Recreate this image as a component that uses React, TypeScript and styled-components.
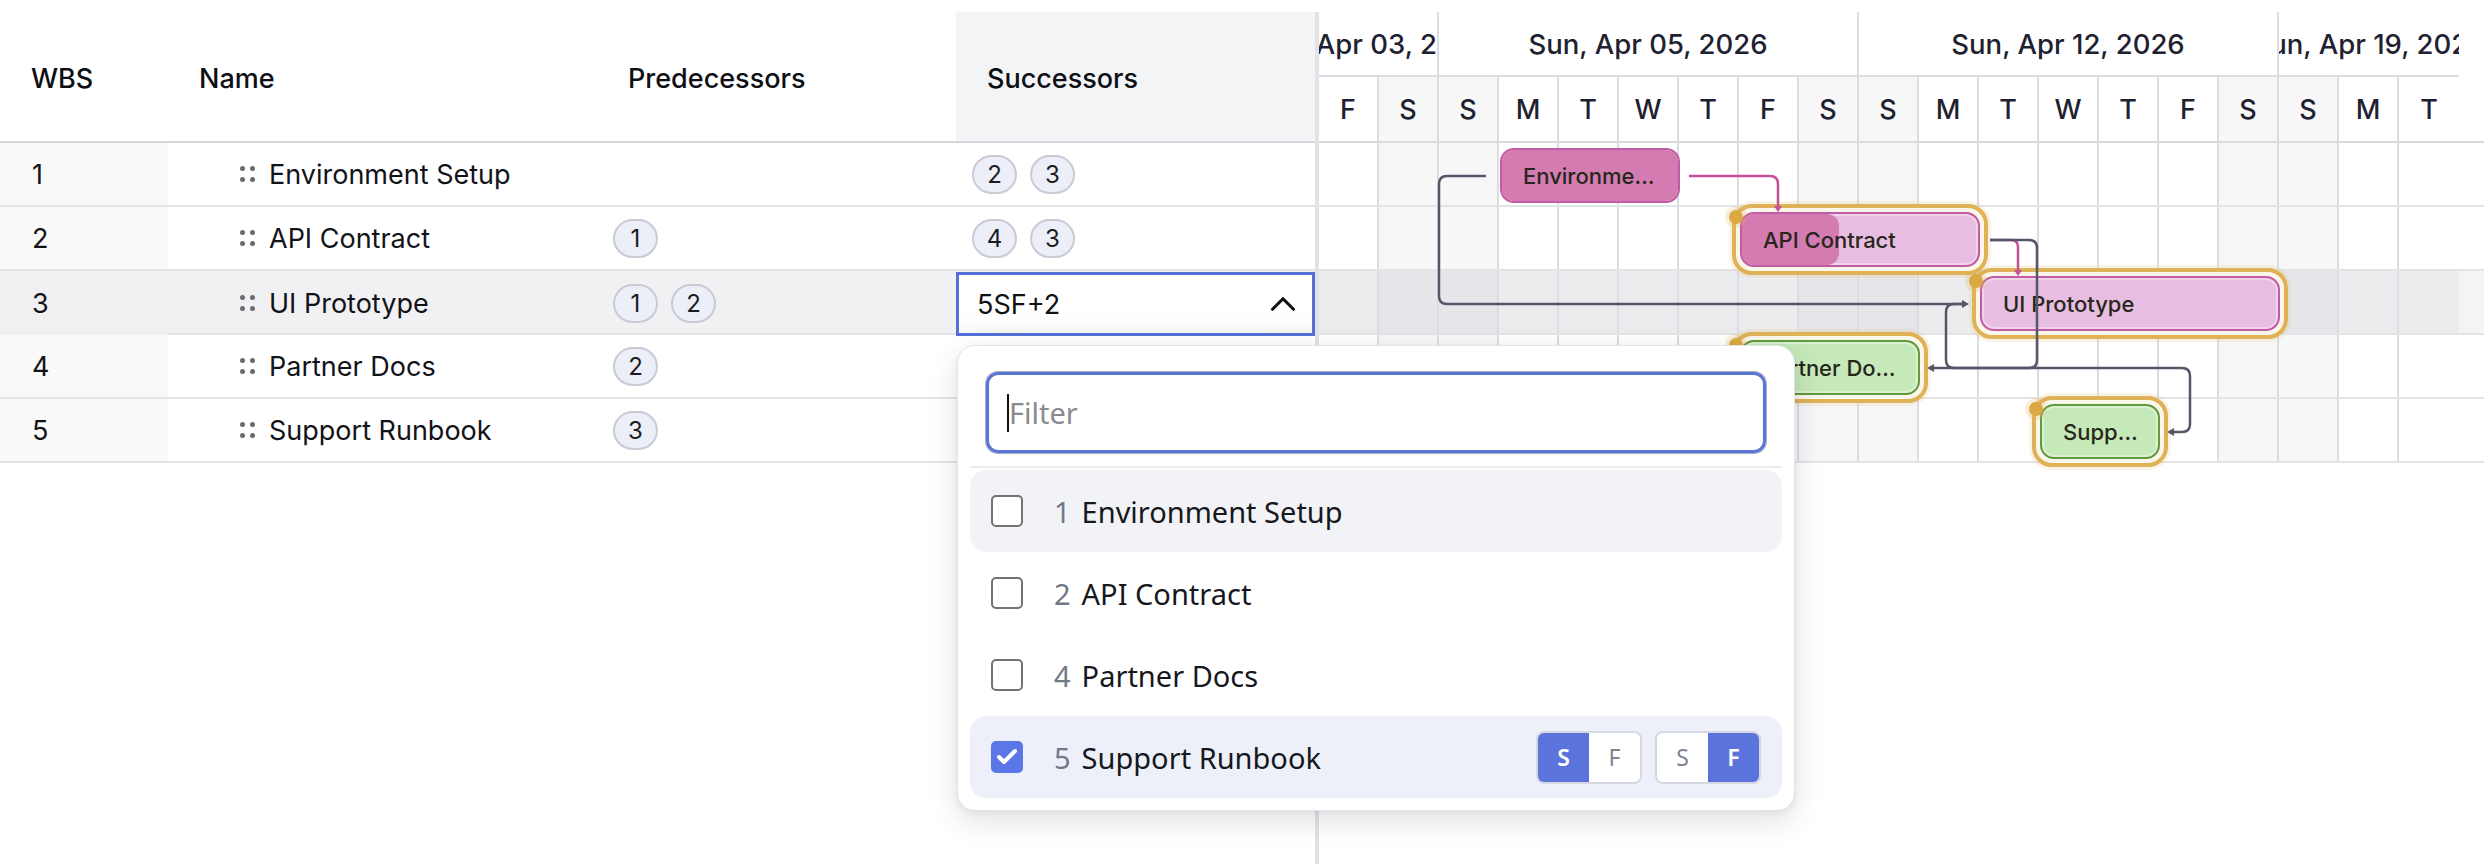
import React from 'react';
import styled, { createGlobalStyle } from 'styled-components';
import { Check, ChevronUp } from 'lucide-react';

const DAY = 60;
const ROW = 64;

const GlobalStyle = createGlobalStyle`
  html, body {
    margin: 0;
    padding: 0;
    background: #fff;
  }
  body {
    font-family: Inter, 'Liberation Sans', sans-serif;
    color: #111318;
  }
`;

type Task = {
  wbs: string;
  name: string;
  preds: string[];
  succs: string[];
  editing?: string;
};

const tasks: Task[] = [
  { wbs: '1', name: 'Environment Setup', preds: [], succs: ['2', '3'] },
  { wbs: '2', name: 'API Contract', preds: ['1'], succs: ['4', '3'] },
  { wbs: '3', name: 'UI Prototype', preds: ['1', '2'], succs: [], editing: '5SF+2' },
  { wbs: '4', name: 'Partner Docs', preds: ['2'], succs: [] },
  { wbs: '5', name: 'Support Runbook', preds: ['3'], succs: [] },
];

const SELECTED_ROW = 2;

const dayLetters = ['F', 'S', 'S', 'M', 'T', 'W', 'T', 'F', 'S', 'S', 'M', 'T', 'W', 'T', 'F', 'S', 'S', 'M', 'T'];
const isWeekend = (i: number) => dayLetters[i] === 'S';

const weeks = [
  { label: 'Fri, Apr 03, 2026', days: 2 },
  { label: 'Sun, Apr 05, 2026', days: 7 },
  { label: 'Sun, Apr 12, 2026', days: 7 },
  { label: 'Sun, Apr 19, 2026', days: 3 },
];

type Bar = {
  name: string;
  row: number;
  start: number;
  days: number;
  tone: 'pink' | 'green';
  progress: number;
  ringed: boolean;
};

const bars: Bar[] = [
  { name: 'Environment Setup', row: 0, start: 3, days: 3, tone: 'pink', progress: 100, ringed: false },
  { name: 'API Contract', row: 1, start: 7, days: 4, tone: 'pink', progress: 41, ringed: true },
  { name: 'UI Prototype', row: 2, start: 11, days: 5, tone: 'pink', progress: 0, ringed: true },
  { name: 'Partner Docs', row: 3, start: 7, days: 3, tone: 'green', progress: 0, ringed: true },
  { name: 'Support Runbook', row: 4, start: 12, days: 2, tone: 'green', progress: 0, ringed: true },
];

const options = [
  { wbs: '1', name: 'Environment Setup', checked: false, hover: true },
  { wbs: '2', name: 'API Contract', checked: false, hover: false },
  { wbs: '4', name: 'Partner Docs', checked: false, hover: false },
  { wbs: '5', name: 'Support Runbook', checked: true, hover: false },
];

const Page = styled.div`
  position: relative;
  width: 2484px;
  height: 864px;
  padding-top: 12px;
  box-sizing: border-box;
  overflow: hidden;
`;

const Board = styled.div`
  display: flex;
  height: 100%;
`;

const TablePane = styled.div`
  width: 1315px;
  flex: none;
`;

const TableRow = styled.div<{ $selected?: boolean }>`
  display: grid;
  grid-template-columns: 168px 429px 359px 359px;
  height: ${ROW}px;
  box-sizing: border-box;
  border-bottom: 2px solid #e4e4e7;
  background: ${(p) => (p.$selected ? '#f1f1f3' : '#fff')};
  font-size: 27px;
`;

const HeaderRow = styled(TableRow)`
  height: 131px;
  border-bottom-color: #d6d6da;
  font-weight: 500;
  color: #0d0f14;
`;

const HeadCell = styled.div<{ $active?: boolean }>`
  display: flex;
  align-items: center;
  padding: 4px 0 0 31px;
  background: ${(p) => (p.$active ? '#f3f4f6' : 'transparent')};
`;

const WbsCell = styled.div<{ $selected?: boolean }>`
  display: flex;
  align-items: center;
  padding-left: 32px;
  background: ${(p) => (p.$selected ? '#f0f0f2' : '#f9f9fa')};
`;

const NameCell = styled.div`
  display: flex;
  align-items: center;
  gap: 12px;
  padding-left: 72px;
`;

const LinkCell = styled.div`
  display: flex;
  align-items: center;
  gap: 13px;
  padding-left: 16px;
`;

const Chip = styled.span`
  display: inline-flex;
  align-items: center;
  justify-content: center;
  width: 45px;
  height: 39px;
  box-sizing: border-box;
  border: 2px solid #c9cad4;
  border-radius: 20px;
  background: #eceef8;
  font-size: 24px;
  color: #1a1c22;
`;

const Editor = styled.div`
  display: flex;
  align-items: center;
  justify-content: space-between;
  width: 100%;
  height: 64px;
  margin-top: 1px;
  box-sizing: border-box;
  border: 3px solid #5470d6;
  padding: 0 8px 0 18px;
  background: linear-gradient(#fff 70%, #f6f6f8);
  font-size: 27px;
  color: #111;
  position: relative;
  z-index: 1;
`;

const Divider = styled.div`
  width: 4px;
  flex: none;
  background: #e3e3e7;
`;

const GanttPane = styled.div`
  flex: 1;
  min-width: 0;
`;

const WeekRow = styled.div`
  display: flex;
  height: 65px;
  width: ${DAY * dayLetters.length}px;
  box-sizing: border-box;
  border-bottom: 2px solid #dcdde3;
`;

const WeekCell = styled.div<{ $last?: boolean }>`
  flex: none;
  display: flex;
  align-items: center;
  justify-content: center;
  overflow: hidden;
  white-space: nowrap;
  box-sizing: border-box;
  border-right: ${(p) => (p.$last ? 'none' : '2px solid #dcdde3')};
  font-size: 27.5px;
  font-weight: 500;
  color: #1e2230;
`;

const DayRow = styled.div`
  display: flex;
  height: 66px;
  box-sizing: border-box;
  border-bottom: 2px solid #d9d9de;
`;

const DayCell = styled.div<{ $weekend?: boolean; $last?: boolean }>`
  flex: none;
  width: ${DAY}px;
  display: flex;
  align-items: center;
  justify-content: center;
  box-sizing: border-box;
  border-right: ${(p) => (p.$last ? 'none' : '2px solid #dcdde3')};
  background: ${(p) => (p.$weekend ? '#f7f7f8' : '#fff')};
  font-size: 27px;
  font-weight: 500;
  color: #1e2230;
`;

const GanttBody = styled.div`
  position: relative;
`;

const GridRow = styled.div<{ $selected?: boolean }>`
  display: flex;
  height: ${ROW}px;
  box-sizing: border-box;
  border-bottom: 2px solid #e4e4e7;
  background: ${(p) => (p.$selected ? '#f4f4f6' : '#fff')};
`;

const GridCell = styled.div<{ $weekend?: boolean; $selected?: boolean; $last?: boolean }>`
  flex: none;
  width: ${DAY}px;
  box-sizing: border-box;
  border-right: ${(p) => (p.$last ? 'none' : '2px solid #dcdde3')};
  background: ${(p) =>
    p.$selected ? (p.$weekend ? '#e6e6ea' : '#ececef') : p.$weekend ? '#f7f7f8' : '#fff'};
`;

const BarSlot = styled.div`
  position: absolute;
  height: 55px;
`;

const Ring = styled.div`
  position: absolute;
  inset: -8px;
  border: 4px solid #dfb257;
  border-radius: 20px;
  background: #fbf6ea;
  box-shadow: 0 0 0 3px rgba(223, 178, 87, 0.15);
`;

const Dot = styled.div`
  position: absolute;
  left: -11px;
  top: -2px;
  width: 14px;
  height: 14px;
  border-radius: 50%;
  background: #dba843;
  box-shadow: 0 0 0 4px rgba(223, 178, 87, 0.22);
  z-index: 2;
`;

const BarBody = styled.div<{ $tone: 'pink' | 'green' }>`
  position: relative;
  height: 100%;
  box-sizing: border-box;
  border: 2px solid ${(p) => (p.$tone === 'pink' ? '#c15ba4' : '#5f9a3b')};
  border-radius: 14px;
  background: ${(p) => (p.$tone === 'pink' ? '#e7bde1' : '#c6e9b9')};
  box-shadow: inset 0 0 0 2px rgba(255, 255, 255, 0.35);
  overflow: hidden;
  display: flex;
  align-items: center;
`;

const Progress = styled.div`
  position: absolute;
  left: 0;
  top: 0;
  bottom: 0;
  background: #d47cb2;
  border-radius: 0 12px 12px 0;
`;

const BarLabel = styled.span`
  position: relative;
  padding: 0 20px 0 21px;
  font-size: 22px;
  font-weight: 500;
  color: #26261a;
  white-space: nowrap;
  overflow: hidden;
  text-overflow: ellipsis;
`;

const Links = styled.svg`
  position: absolute;
  left: 0;
  top: 0;
  overflow: visible;
  pointer-events: none;
`;

const Popup = styled.div`
  position: absolute;
  left: 957px;
  top: 345px;
  width: 838px;
  height: 466px;
  box-sizing: border-box;
  padding: 12px;
  background: #fff;
  border: 1px solid #e4e4e8;
  border-radius: 18px;
  box-shadow: 0 10px 30px rgba(20, 20, 40, 0.12), 0 2px 6px rgba(20, 20, 40, 0.06);
  font-family: 'Noto Sans', 'Open Sans', sans-serif;
  z-index: 5;
`;

const FilterArea = styled.div`
  padding: 14px 16px 13px;
  border-bottom: 2px solid #ececf0;
`;

const FilterBox = styled.label`
  display: flex;
  align-items: center;
  height: 81px;
  box-sizing: border-box;
  padding-left: 18px;
  border: 3px solid #5a76d4;
  border-radius: 12px;
  box-shadow: 0 0 0 1px #a9b1c4;
`;

const Caret = styled.span`
  width: 2px;
  height: 38px;
  background: #111;
  flex: none;
`;

const FilterInput = styled.input`
  flex: 1;
  border: none;
  outline: none;
  background: transparent;
  padding: 0;
  font: inherit;
  font-size: 29px;
  color: #111;
  &::placeholder {
    color: #8a8a8e;
  }
`;

const OptionList = styled.div`
  display: flex;
  flex-direction: column;
  margin-top: 2px;
`;

const Option = styled.div<{ $hover?: boolean; $checked?: boolean }>`
  display: flex;
  align-items: center;
  height: 82px;
  padding: 0 21px;
  border-radius: 16px;
  background: ${(p) => (p.$checked ? '#eef0f9' : p.$hover ? '#f2f3f7' : 'transparent')};
`;

const Box = styled.span<{ $checked?: boolean }>`
  display: inline-flex;
  align-items: center;
  justify-content: center;
  width: 32px;
  height: 32px;
  box-sizing: border-box;
  border-radius: 5px;
  border: 2px solid ${(p) => (p.$checked ? '#5b76e6' : '#737373')};
  background: ${(p) => (p.$checked ? '#5b76e6' : '#fff')};
  color: #fff;
  margin-right: 31px;
`;

const OptNum = styled.span`
  font-size: 29px;
  color: #737886;
  margin-right: 11px;
`;

const OptName = styled.span`
  font-size: 29px;
  color: #16181d;
  flex: 1;
`;

const ToggleGroup = styled.div`
  display: flex;
  height: 53px;
  box-sizing: border-box;
  border: 2px solid #d5d8e3;
  border-radius: 8px;
  overflow: hidden;
  margin-left: 13px;
`;

const Toggle = styled.span<{ $on?: boolean }>`
  display: flex;
  align-items: center;
  justify-content: center;
  width: 51px;
  font-size: 23px;
  font-weight: ${(p) => (p.$on ? 600 : 400)};
  color: ${(p) => (p.$on ? '#fff' : '#808592')};
  background: ${(p) => (p.$on ? '#5b74dc' : '#fff')};
`;

function GripDots() {
  return (
    <svg width="17" height="17" viewBox="0 0 17 17">
      {[2.5, 12.5].map((x) =>
        [2.5, 13.5].map((y) => <circle key={`${x}-${y}`} cx={x} cy={y} r="2.5" fill="#6b6b6f" />),
      )}
    </svg>
  );
}

function GanttBar({ bar }: { bar: Bar }) {
  const style = {
    left: bar.start * DAY + 1,
    top: bar.row * ROW + 5,
    width: bar.days * DAY,
  };
  return (
    <BarSlot style={style}>
      {bar.ringed && <Ring />}
      {bar.ringed && <Dot />}
      <BarBody $tone={bar.tone}>
        {bar.progress > 0 && <Progress style={{ width: `${bar.progress}%` }} />}
        <BarLabel>{bar.name}</BarLabel>
      </BarBody>
    </BarSlot>
  );
}

function DependencyLinks() {
  const pink = '#c4509a';
  const gray = '#535768';
  return (
    <Links width="1165" height="330">
      <path d="M370 33 H451 Q459 33 459 41 V64" stroke={pink} strokeWidth="2.5" fill="none" />
      <polygon points="455,63 463,63 459,69" fill={pink} />
      <path d="M671 97 H692 Q699 97 699 104 V128" stroke={pink} strokeWidth="2.5" fill="none" />
      <polygon points="695,127 703,127 699,133" fill={pink} />
      <path d="M167 33 H128 Q120 33 120 41 V153 Q120 161 128 161 H644" stroke={gray} strokeWidth="2.5" fill="none" />
      <polygon points="643,157 643,165 650,161" fill={gray} />
      <path d="M671 97 H710 Q718 97 718 105 V217 Q718 225 710 225 H614" stroke={gray} strokeWidth="2.5" fill="none" />
      <polygon points="615,221 615,229 608,225" fill={gray} />
      <path
        d="M647 161 H635 Q627 161 627 169 V217 Q627 225 635 225 H863 Q871 225 871 233 V281 Q871 289 863 289 H854"
        stroke={gray}
        strokeWidth="2.5"
        fill="none"
      />
      <polygon points="855,285 855,293 848,289" fill={gray} />
    </Links>
  );
}

export default function App() {
  const lastDay = dayLetters.length - 1;
  return (
    <Page>
      <GlobalStyle />
      <Board>
        <TablePane>
          <HeaderRow>
            <HeadCell>WBS</HeadCell>
            <HeadCell>Name</HeadCell>
            <HeadCell>Predecessors</HeadCell>
            <HeadCell $active>Successors</HeadCell>
          </HeaderRow>
          {tasks.map((t, i) => (
            <TableRow key={t.wbs} $selected={i === SELECTED_ROW}>
              <WbsCell $selected={i === SELECTED_ROW}>{t.wbs}</WbsCell>
              <NameCell>
                <GripDots />
                {t.name}
              </NameCell>
              <LinkCell>
                {t.preds.map((p) => (
                  <Chip key={p}>{p}</Chip>
                ))}
              </LinkCell>
              {t.editing ? (
                <Editor>
                  {t.editing}
                  <ChevronUp size={42} strokeWidth={1.8} color="#111" />
                </Editor>
              ) : (
                <LinkCell>
                  {t.succs.map((s) => (
                    <Chip key={s}>{s}</Chip>
                  ))}
                </LinkCell>
              )}
            </TableRow>
          ))}
        </TablePane>
        <Divider />
        <GanttPane>
          <WeekRow>
            {weeks.map((w, i) => (
              <WeekCell key={w.label} $last={i === weeks.length - 1} style={{ width: w.days * DAY }}>
                {w.label}
              </WeekCell>
            ))}
          </WeekRow>
          <DayRow>
            {dayLetters.map((d, i) => (
              <DayCell key={i} $weekend={isWeekend(i)} $last={i === lastDay}>
                {d}
              </DayCell>
            ))}
          </DayRow>
          <GanttBody>
            {tasks.map((t, r) => (
              <GridRow key={t.wbs} $selected={r === SELECTED_ROW}>
                {dayLetters.map((_, i) => (
                  <GridCell key={i} $weekend={isWeekend(i)} $selected={r === SELECTED_ROW} $last={i === lastDay} />
                ))}
              </GridRow>
            ))}
            {bars.map((b) => (
              <GanttBar key={b.name} bar={b} />
            ))}
            <DependencyLinks />
          </GanttBody>
        </GanttPane>
      </Board>
      <Popup>
        <FilterArea>
          <FilterBox>
            <Caret />
            <FilterInput placeholder="Filter" readOnly />
          </FilterBox>
        </FilterArea>
        <OptionList>
          {options.map((o) => (
            <Option key={o.wbs} $hover={o.hover} $checked={o.checked}>
              <Box $checked={o.checked}>{o.checked && <Check size={24} strokeWidth={4} />}</Box>
              <OptNum>{o.wbs}</OptNum>
              <OptName>{o.name}</OptName>
              {o.checked && (
                <>
                  <ToggleGroup>
                    <Toggle $on>S</Toggle>
                    <Toggle>F</Toggle>
                  </ToggleGroup>
                  <ToggleGroup>
                    <Toggle>S</Toggle>
                    <Toggle $on>F</Toggle>
                  </ToggleGroup>
                </>
              )}
            </Option>
          ))}
        </OptionList>
      </Popup>
    </Page>
  );
}
